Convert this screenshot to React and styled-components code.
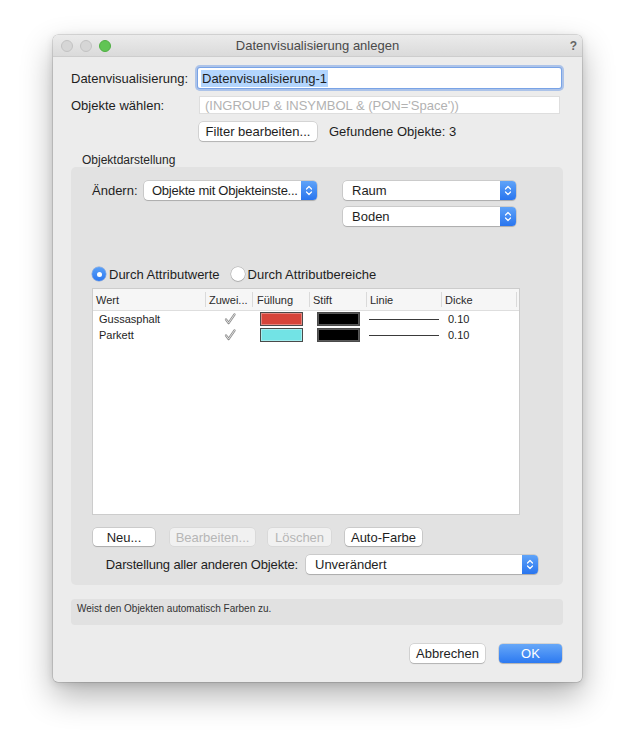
import React from "react";
import styled, { createGlobalStyle } from "styled-components";

const GlobalStyle = createGlobalStyle`
  html, body { margin: 0; padding: 0; background: #ffffff; }
  body {
    font-family: "Liberation Sans", Arial, sans-serif;
    font-size: 13px;
    color: #1e1e1e;
  }
  * { box-sizing: border-box; }
`;

const Page = styled.div`
  padding: 35px 0 60px 53px;
`;

const Window = styled.div`
  width: 529px;
  background: #ececec;
  border-radius: 5px;
  overflow: hidden;
  box-shadow: 0 0 0 0.5px rgba(0, 0, 0, 0.22), 0 14px 32px rgba(0, 0, 0, 0.3),
    0 2px 8px rgba(0, 0, 0, 0.12);
`;

const TitleBar = styled.div`
  height: 22px;
  display: grid;
  grid-template-columns: 70px 1fr 70px;
  align-items: center;
  background: linear-gradient(#ebebeb, #dadada);
  border-bottom: 1px solid #cdcdcd;
`;

const Lights = styled.div`
  display: flex;
  gap: 7px;
  padding-left: 8px;
`;

const Light = styled.span`
  width: 12px;
  height: 12px;
  border-radius: 50%;
  background: ${(p) => (p.green ? "#61c454" : "#d6d6d6")};
  border: 0.5px solid ${(p) => (p.green ? "#4fae43" : "#c2c2c2")};
`;

const Title = styled.div`
  text-align: center;
  font-size: 13px;
  color: #4a4a4a;
`;

const HelpMark = styled.div`
  justify-self: end;
  padding-right: 5px;
  font-size: 12px;
  font-weight: bold;
  color: #666;
`;

const Body = styled.div`
  padding: 11px 19px 19px 18px;
`;

const FieldRow = styled.div`
  display: grid;
  grid-template-columns: 127px 1fr;
  align-items: center;
  height: ${(p) => p.h}px;
  margin-top: ${(p) => p.mt || 0}px;
`;

const Label = styled.div`
  font-size: 13px;
  color: #1e1e1e;
  white-space: nowrap;
`;

const FocusInput = styled.div`
  height: 20px;
  margin-right: 2px;
  background: #fff;
  display: flex;
  align-items: center;
  padding-left: 3px;
  border-radius: 2px;
  box-shadow: 0 0 0 1px #79a3e6, 0 0 0 3px rgba(120, 162, 232, 0.55);
`;

const Selection = styled.span`
  background: #b3d5fd;
  padding: 1px 1px;
`;

const PlainInput = styled.div`
  height: 18px;
  margin: 0 3px 0 1px;
  background: #fff;
  border: 1px solid #dedede;
  display: flex;
  align-items: center;
  padding-left: 5px;
  color: #b2b2b2;
  font-size: 13px;
`;

const InlineRow = styled.div`
  display: flex;
  align-items: center;
  gap: ${(p) => p.gap || 0}px;
  padding-left: ${(p) => p.pl || 0}px;
`;

const PushButton = styled.div`
  width: ${(p) => p.w}px;
  height: ${(p) => p.h || 19}px;
  margin-left: ${(p) => p.ml || 0}px;
  display: flex;
  align-items: center;
  justify-content: center;
  border-radius: 4px;
  font-size: 13px;
  white-space: nowrap;
  background: ${(p) =>
    p.primary
      ? "linear-gradient(#67a8f8, #2c79f1)"
      : p.disabled
      ? "#f1f1f1"
      : "#ffffff"};
  color: ${(p) => (p.primary ? "#fff" : p.disabled ? "#b6b6b6" : "#1e1e1e")};
  box-shadow: ${(p) =>
    p.disabled
      ? "0 0 0 0.5px rgba(0,0,0,0.08)"
      : "0 0 0 0.5px rgba(0,0,0,0.2), 0 1px 1px rgba(0,0,0,0.16)"};
`;

const Counter = styled.span`
  font-size: 13px;
`;

const GroupLabel = styled.div`
  margin: 12px 0 0 11px;
  height: 14px;
  line-height: 14px;
  font-size: 12px;
  color: #262626;
`;

const GroupBox = styled.div`
  background: #e2e2e2;
  border-radius: 5px;
  padding: 14px 0 11px 21px;
`;

const ChangeGrid = styled.div`
  display: grid;
  grid-template-columns: 52px 199px 173px;
  grid-auto-rows: 19px;
  row-gap: 7px;
  align-items: center;
`;

const PopupBox = styled.div`
  width: ${(p) => p.w}px;
  height: 19px;
  display: flex;
  align-items: center;
  background: #fff;
  border-radius: 4px;
  box-shadow: 0 0 0 0.5px rgba(0, 0, 0, 0.2), 0 1px 1px rgba(0, 0, 0, 0.15);
  grid-column: ${(p) => p.col || "auto"};
`;

const PopupText = styled.span`
  flex: 1;
  padding-left: ${(p) => (p.tight ? 8 : 9)}px;
  font-size: 13px;
  letter-spacing: ${(p) => (p.tight ? "-0.25px" : "0")};
  white-space: nowrap;
  overflow: hidden;
`;

const Stepper = styled.span`
  width: 16px;
  height: 19px;
  flex-shrink: 0;
  border-radius: 0 4px 4px 0;
  background: linear-gradient(#5fa3f8, #2975ef);
  display: flex;
  align-items: center;
  justify-content: center;
`;

const Popup = ({ w, col, tight, children }) => (
  <PopupBox w={w} col={col}>
    <PopupText tight={tight}>{children}</PopupText>
    <Stepper>
      <svg width="8" height="13" viewBox="0 0 8 13">
        <path d="M1.5 5 L4 2.5 L6.5 5" fill="none" stroke="#fff" strokeWidth="1.2" strokeLinecap="round" strokeLinejoin="round" />
        <path d="M1.5 8 L4 10.5 L6.5 8" fill="none" stroke="#fff" strokeWidth="1.2" strokeLinecap="round" strokeLinejoin="round" />
      </svg>
    </Stepper>
  </PopupBox>
);

const RadioRow = styled.div`
  display: flex;
  align-items: center;
  height: 16px;
  margin-top: 40px;
  gap: 11px;
`;

const RadioItem = styled.label`
  display: flex;
  align-items: center;
  gap: 3px;
  font-size: 13px;
`;

const RadioDot = styled.span`
  width: 14px;
  height: 14px;
  border-radius: 50%;
  display: flex;
  align-items: center;
  justify-content: center;
  background: ${(p) => (p.on ? "linear-gradient(#5aa0f7, #2c78f0)" : "#fff")};
  box-shadow: ${(p) =>
    p.on
      ? "0 0 0 0.5px rgba(30,90,200,0.5)"
      : "0 0 0 0.5px rgba(0,0,0,0.25), 0 1px 1px rgba(0,0,0,0.12)"};
  &::after {
    content: "";
    width: 5px;
    height: 5px;
    border-radius: 50%;
    background: #fff;
    display: ${(p) => (p.on ? "block" : "none")};
  }
`;

const Table = styled.div`
  width: 428px;
  height: 227px;
  margin-top: 6px;
  background: #fff;
  border: 1px solid #cccccc;
  display: flex;
  flex-direction: column;
`;

const COLS = "113px 47px 57px 57px 75px 75px";

const HeaderRow = styled.div`
  display: grid;
  grid-template-columns: ${COLS};
  height: 22px;
  background: #f6f6f6;
  border-bottom: 1px solid #dedede;
`;

const HeaderCell = styled.div`
  display: flex;
  align-items: center;
  padding-left: ${(p) => p.pl || 3}px;
  font-size: 11px;
  color: #2a2a2a;
  border-right: 1px solid #dadada;
  margin: 3px 0;
  white-space: nowrap;
`;

const DataRow = styled.div`
  display: grid;
  grid-template-columns: ${COLS};
  height: 16px;
  align-items: center;
  font-size: 11px;
  color: #1e1e1e;
`;

const Cell = styled.div`
  display: flex;
  align-items: center;
  justify-content: ${(p) => (p.center ? "center" : "flex-start")};
  padding-left: ${(p) => p.pl || 0}px;
`;

const Swatch = styled.span`
  width: 43px;
  height: 14px;
  background: ${(p) => p.color};
  border: 1px solid #4a4a4a;
  box-shadow: inset 0 0 0 1px rgba(255, 255, 255, 0.35);
`;

const LineSample = styled.span`
  width: 70px;
  height: 1px;
  background: #3a3a3a;
`;

const Check = () => (
  <svg width="12" height="12" viewBox="0 0 12 12">
    <path d="M2 6.5 L4.6 10 L10.5 1.5" fill="none" stroke="#8c8c8c" strokeWidth="2.2" strokeLinecap="round" strokeLinejoin="round" />
    <path d="M2 6.5 L4.6 10 L10.5 1.5" fill="none" stroke="#f4f4f4" strokeWidth="0.8" strokeLinecap="round" strokeLinejoin="round" />
  </svg>
);

const ButtonRow = styled.div`
  display: flex;
  margin: 13px 0 0 1px;
`;

const OtherRow = styled.div`
  display: grid;
  grid-template-columns: 1fr 232px;
  align-items: center;
  margin-top: 9px;
  padding-right: 25px;
`;

const RightLabel = styled.div`
  text-align: right;
  padding-right: 8px;
  font-size: 13px;
  letter-spacing: -0.15px;
  white-space: nowrap;
`;

const HelpBox = styled.div`
  margin-top: 14px;
  height: 26px;
  background: #e1e1e1;
  border-radius: 4px;
  padding: 4px 6px 0;
  line-height: 12px;
  font-size: 10px;
  color: #333;
`;

const Footer = styled.div`
  display: flex;
  justify-content: flex-end;
  gap: 14px;
  margin-top: 19px;
  padding-right: 1px;
`;

const rows = [
  { name: "Gussasphalt", fill: "#d6443a" },
  { name: "Parkett", fill: "#72e3e5" },
];

export default function App() {
  return (
    <>
      <GlobalStyle />
      <Page>
        <Window>
          <TitleBar>
            <Lights>
              <Light />
              <Light />
              <Light green />
            </Lights>
            <Title>Datenvisualisierung anlegen</Title>
            <HelpMark>?</HelpMark>
          </TitleBar>
          <Body>
            <FieldRow h={20}>
              <Label>Datenvisualisierung:</Label>
              <FocusInput>
                <Selection>Datenvisualisierung-1</Selection>
              </FocusInput>
            </FieldRow>
            <FieldRow h={18} mt={8}>
              <Label>Objekte wählen:</Label>
              <PlainInput>(INGROUP &amp; INSYMBOL &amp; (PON='Space'))</PlainInput>
            </FieldRow>
            <FieldRow h={19} mt={8}>
              <span />
              <InlineRow gap={12} pl={1}>
                <PushButton w={118}>Filter bearbeiten...</PushButton>
                <Counter>Gefundene Objekte: 3</Counter>
              </InlineRow>
            </FieldRow>

            <GroupLabel>Objektdarstellung</GroupLabel>
            <GroupBox>
              <ChangeGrid>
                <Label>Ändern:</Label>
                <Popup w={173} tight>Objekte mit Objekteinste...</Popup>
                <Popup w={173}>Raum</Popup>
                <Popup w={173} col={3}>Boden</Popup>
              </ChangeGrid>

              <RadioRow>
                <RadioItem>
                  <RadioDot on />
                  Durch Attributwerte
                </RadioItem>
                <RadioItem>
                  <RadioDot />
                  Durch Attributbereiche
                </RadioItem>
              </RadioRow>

              <Table>
                <HeaderRow>
                  <HeaderCell>Wert</HeaderCell>
                  <HeaderCell>Zuwei...</HeaderCell>
                  <HeaderCell pl={4}>Füllung</HeaderCell>
                  <HeaderCell>Stift</HeaderCell>
                  <HeaderCell>Linie</HeaderCell>
                  <HeaderCell>Dicke</HeaderCell>
                </HeaderRow>
                {rows.map((r) => (
                  <DataRow key={r.name}>
                    <Cell pl={6}>{r.name}</Cell>
                    <Cell center>
                      <Check />
                    </Cell>
                    <Cell pl={7}>
                      <Swatch color={r.fill} />
                    </Cell>
                    <Cell pl={7}>
                      <Swatch color="#000" />
                    </Cell>
                    <Cell pl={2}>
                      <LineSample />
                    </Cell>
                    <Cell pl={6}>0.10</Cell>
                  </DataRow>
                ))}
              </Table>

              <ButtonRow>
                <PushButton w={62} h={18}>Neu...</PushButton>
                <PushButton w={85} h={18} ml={15} disabled>
                  Bearbeiten...
                </PushButton>
                <PushButton w={63} h={18} ml={13} disabled>
                  Löschen
                </PushButton>
                <PushButton w={77} h={18} ml={14}>
                  Auto-Farbe
                </PushButton>
              </ButtonRow>

              <OtherRow>
                <RightLabel>Darstellung aller anderen Objekte:</RightLabel>
                <Popup w={232}>Unverändert</Popup>
              </OtherRow>
            </GroupBox>

            <HelpBox>Weist den Objekten automatisch Farben zu.</HelpBox>

            <Footer>
              <PushButton w={75}>Abbrechen</PushButton>
              <PushButton w={63} primary>
                OK
              </PushButton>
            </Footer>
          </Body>
        </Window>
      </Page>
    </>
  );
}
